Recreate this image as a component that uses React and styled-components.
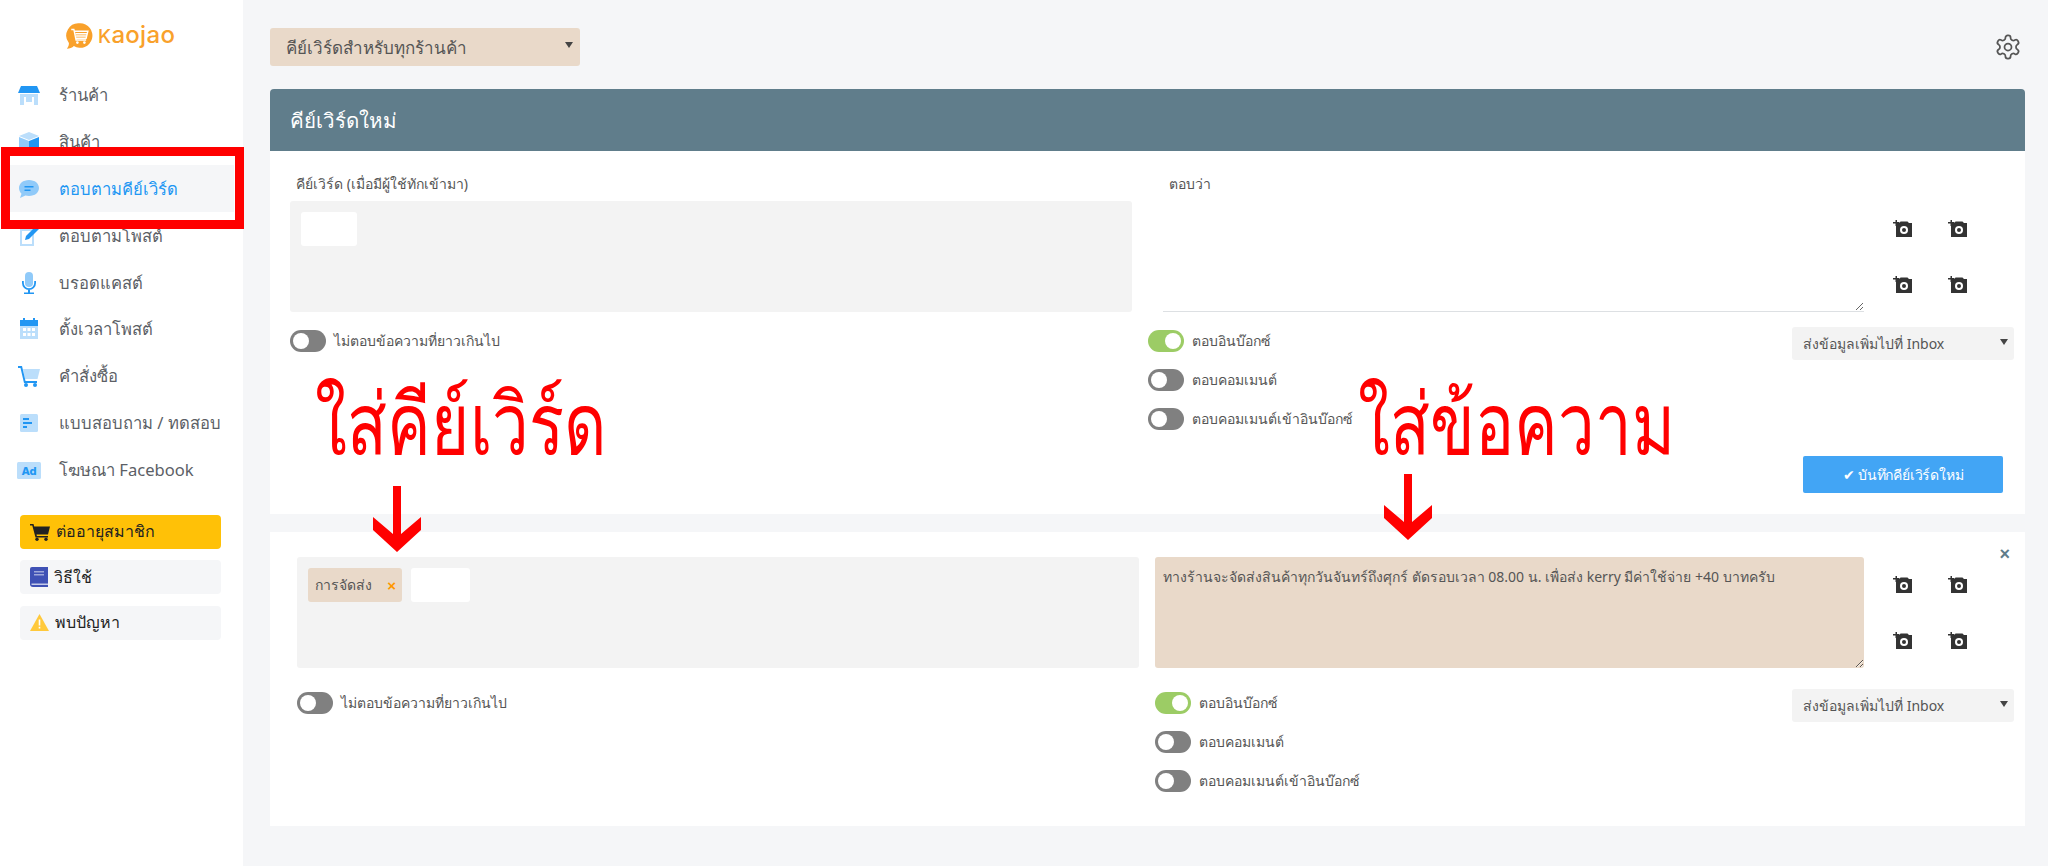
import React from "react";
import styled, { createGlobalStyle } from "styled-components";

const GlobalStyle = createGlobalStyle`
  html, body {
    margin: 0;
    padding: 0;
    background: #f5f6f8;
    font-family: "Noto Sans", "Open Sans", sans-serif;
    color: #555;
  }
  * { box-sizing: border-box; }
`;

const Page = styled.div`
  position: relative;
  display: flex;
  width: 2048px;
  height: 866px;
  overflow: hidden;
`;

/* sidebar */
const Sidebar = styled.aside`
  width: 243px;
  flex-shrink: 0;
  background: #fff;
`;

const LogoRow = styled.div`
  height: 71.500px;
  padding: 22px 0 0 66px;
  display: flex;
  align-items: flex-start;
  gap: 4px;
`;

const LogoText = styled.span`
  display: block;
  font-family: "Inter", sans-serif;
  font-size: 24px;
  line-height: 26px;
  font-weight: 500;
  letter-spacing: 0.3px;
  color: #f9a12b;

  &::first-letter {
    font-size: 19px;
  }
`;

const Nav = styled.nav`
  margin: 0 9px 0 10px;
`;

const NavItem = styled.div`
  height: 46.900px;
  padding-left: 7px;
  display: flex;
  align-items: center;
  gap: 18px;
  font-size: 16.600px;
  color: ${(p) => (p.$active ? "#2196f3" : "#5c5f66")};
  background: ${(p) => (p.$active ? "#f5f6f8" : "transparent")};
`;

const NavIcon = styled.svg`
  width: 24px;
  height: 24px;
  flex-shrink: 0;
`;

const SideButtons = styled.div`
  margin: 21px 22px 0 20px;
  display: flex;
  flex-direction: column;
  gap: 11.500px;
`;

const SideButton = styled.div`
  height: 34px;
  padding-left: 10px;
  border-radius: 4px;
  display: flex;
  align-items: center;
  gap: 6px;
  font-size: 16px;
  color: #222;
  background: ${(p) => (p.$primary ? "#ffc107" : "#f5f6f8")};
`;

/* main column */
const Main = styled.main`
  flex: 1;
  padding: 28px 23px 0 27px;
`;

const TopBar = styled.div`
  display: flex;
  justify-content: space-between;
  align-items: center;
  margin-bottom: 23px;
`;

const ShopSelect = styled.div`
  width: 310px;
  height: 38px;
  padding: 0 7px 0 16px;
  border-radius: 3px;
  background: #e9d9c9;
  display: flex;
  align-items: center;
  justify-content: space-between;
  font-size: 17px;
  color: #555;
`;

const Caret = styled.span`
  width: 0;
  height: 0;
  margin-bottom: 4px;
  border-left: 4px solid transparent;
  border-right: 4px solid transparent;
  border-top: 6px solid #444;
`;

const GearIcon = styled.svg`
  width: 28px;
  height: 28px;
  margin-right: 3px;
`;

const CardHeader = styled.div`
  height: 62px;
  padding-left: 20px;
  border-radius: 4px 4px 0 0;
  background: #607d8b;
  display: flex;
  align-items: center;
  font-size: 20.500px;
  color: #fff;
`;

const Card = styled.section`
  position: relative;
  background: #fff;
  margin-top: ${(p) => p.$top || 0}px;
  padding: ${(p) => p.$padTop}px 11px ${(p) => p.$padBottom}px ${(p) => p.$inset}px;
`;

const EditorGrid = styled.div`
  display: grid;
  grid-template-columns: 842px 1fr;
  column-gap: 16px;
`;

const FieldLabel = styled.div`
  height: 20px;
  margin: 0 0 7px ${(p) => p.$indent}px;
  font-size: 14px;
  line-height: 20px;
  color: #555;
`;

const KeywordBox = styled.div`
  height: 111px;
  padding: 11px;
  border-radius: 3px;
  background: #f3f3f3;
  display: flex;
  align-items: flex-start;
  gap: 9px;
`;

const KeywordInput = styled.div`
  width: ${(p) => p.$width}px;
  height: 34px;
  border-radius: 3px;
  background: #fff;
`;

const KeywordTag = styled.div`
  width: 94px;
  height: 34px;
  padding: 0 6px 0 7px;
  border-radius: 3px;
  background: #e9d9c9;
  display: flex;
  align-items: center;
  justify-content: space-between;
  font-size: 14px;
  color: #555;
`;

const TagRemove = styled.span`
  font-family: "Liberation Sans", sans-serif;
  font-size: 15px;
  font-weight: 700;
  color: #ff9800;
`;

const ReplyRow = styled.div`
  display: flex;
  align-items: center;
`;

const ReplyField = styled.textarea`
  flex: 1;
  height: 111px;
  margin-left: ${(p) => (p.$filled ? 0 : 15)}px;
  padding: 10px 8px;
  border: none;
  border-radius: ${(p) => (p.$filled ? "3px" : "0")};
  border-bottom: ${(p) => (p.$filled ? "none" : "1px solid #dde0e3")};
  outline: none;
  background: ${(p) => (p.$filled ? "#e9d9c9" : "transparent")};
  font-family: inherit;
  font-size: 14px;
  line-height: 20px;
  color: #555;
`;

const PhotoGrid = styled.div`
  width: 150px;
  padding-left: 29px;
  display: grid;
  grid-template-columns: repeat(2, 19px);
  column-gap: 36px;
  row-gap: 39px;
`;

const PhotoIcon = styled.svg`
  width: 19px;
  height: 17px;
`;

const OptionRow = styled.div`
  margin-top: ${(p) => p.$gap}px;
  display: flex;
  justify-content: space-between;
  align-items: flex-start;
`;

const SwitchStack = styled.div`
  padding-top: 3px;
  display: flex;
  flex-direction: column;
  gap: 17px;
`;

const SwitchRow = styled.label`
  height: 22px;
  display: flex;
  align-items: center;
  gap: 8px;
  font-size: 14px;
  color: #555;
`;

const Track = styled.span`
  width: 36px;
  height: 22px;
  padding: 3px;
  border-radius: 11px;
  background: ${(p) => (p.$on ? "#9ccc65" : "#808080")};
  display: flex;
  justify-content: ${(p) => (p.$on ? "flex-end" : "flex-start")};
`;

const Knob = styled.span`
  width: 16px;
  height: 16px;
  border-radius: 50%;
  background: #fff;
`;

const InboxSelect = styled.div`
  width: 222px;
  height: 33px;
  padding: 0 6px 0 11px;
  border-radius: 3px;
  background: #f3f3f3;
  display: flex;
  align-items: center;
  justify-content: space-between;
  font-size: 14px;
  color: #555;
`;

const Footer = styled.div`
  margin-top: 26px;
  padding-right: 11px;
  display: flex;
  justify-content: flex-end;
`;

const SaveButton = styled.button`
  width: 200px;
  height: 37px;
  border: none;
  border-radius: 2px;
  background: #42a5f5;
  color: #fff;
  font-family: inherit;
  font-size: 14px;
  letter-spacing: -0.2px;
  display: flex;
  align-items: center;
  justify-content: center;
  gap: 4px;
`;

const CloseMark = styled.span`
  position: absolute;
  top: 13px;
  right: 15px;
  font-family: "Liberation Sans", sans-serif;
  font-size: 18px;
  line-height: 18px;
  font-weight: 700;
  color: #607d8b;
`;

/* red annotations painted on top of the screenshot */
const RedFrame = styled.div`
  position: absolute;
  left: 1px;
  top: 147px;
  width: 243px;
  height: 82px;
  border: 9px solid #ff0000;
`;

const BigNote = styled.div`
  position: absolute;
  left: ${(p) => p.$x}px;
  top: ${(p) => p.$y}px;
  font-size: 85px;
  line-height: 110px;
  white-space: nowrap;
  color: #ff0000;
  transform: scaleX(${(p) => p.$squeeze});
  transform-origin: left center;
`;

const DownArrow = styled.svg`
  position: absolute;
  left: ${(p) => p.$x}px;
  top: ${(p) => p.$y}px;
  width: 48px;
  height: 66px;
`;

const Icon = ({ children }) => <NavIcon viewBox="0 0 24 24">{children}</NavIcon>;

const LIGHT = "#bbdefb";
const BLUE = "#2196f3";

const menu = [
  {
    label: "ร้านค้า",
    icon: (
      <>
        <path d="M3 11h18v11h-4v-8H7v8H3z" fill={LIGHT} />
        <path d="M9 14h6v5H9z" fill={LIGHT} />
        <path d="M4 3h16l3 7H1z" fill={BLUE} />
      </>
    ),
  },
  {
    label: "สินค้า",
    icon: (
      <>
        <path d="M12 2l10 4-10 4L2 6z" fill={LIGHT} />
        <path d="M2 7l10 4v11L2 18z" fill="#90caf9" />
        <path d="M22 7l-10 4v11l10-4z" fill={BLUE} />
      </>
    ),
  },
  {
    label: "ตอบตามคีย์เวิร์ด",
    active: true,
    icon: (
      <>
        <path d="M12 3c6 0 10 3.600 10 8s-4 8-10 8c-1.300 0-2.500-.2-3.600-.5L3 21l1.500-4.300C2.900 15.200 2 13.200 2 11c0-4.400 4-8 10-8z" fill="#90caf9" />
        <path d="M7.500 9h9v1.600h-9zM7.500 12.500h6v1.600h-6z" fill={BLUE} />
      </>
    ),
  },
  {
    label: "ตอบตามโพสต์",
    icon: (
      <>
        <path d="M4 6h12v15H4z" fill="#fff" stroke={LIGHT} strokeWidth="2" />
        <path d="M19 2l3 3-10 10-4 1 1-4z" fill={BLUE} />
      </>
    ),
  },
  {
    label: "บรอดแคสต์",
    icon: (
      <>
        <rect x="8" y="1" width="8" height="15" rx="4" fill="#90caf9" />
        <path d="M5 10v2a7 7 0 0 0 14 0v-2h-1.800v2a5.200 5.200 0 0 1-10.400 0v-2zM11 19h2v2.500h4V23H7v-1.500h4z" fill={BLUE} />
      </>
    ),
  },
  {
    label: "ตั้งเวลาโพสต์",
    icon: (
      <>
        <path d="M3 8h18v14H3z" fill={LIGHT} />
        <path d="M3 3h18v6H3z" fill={BLUE} />
        <path d="M6 1h2v4H6zM16 1h2v4h-2z" fill={BLUE} />
        <path d="M6 11h3v3H6zM10.500 11h3v3h-3zM15 11h3v3h-3zM6 16h3v3H6zM10.500 16h3v3h-3zM15 16h3v3h-3z" fill="#fff" />
      </>
    ),
  },
  {
    label: "คำสั่งซื้อ",
    icon: (
      <>
        <path d="M6 5h17l-2.500 10H8z" fill={LIGHT} />
        <path d="M1 2h4l3.500 15H20v2H7L3.500 4H1z" fill={BLUE} />
        <circle cx="9" cy="21" r="2" fill={BLUE} />
        <circle cx="18" cy="21" r="2" fill={BLUE} />
      </>
    ),
  },
  {
    label: "แบบสอบถาม / ทดสอบ",
    icon: (
      <>
        <rect x="3" y="3" width="18" height="18" rx="1.500" fill={LIGHT} />
        <path d="M6 7h6v2H6zM6 11h9v2H6zM6 15h4v2H6z" fill={BLUE} />
      </>
    ),
  },
  {
    label: "โฆษณา Facebook",
    icon: (
      <>
        <rect x="0" y="4" width="24" height="17" rx="1.500" fill={LIGHT} />
        <text x="12" y="17" textAnchor="middle" fontFamily="Inter, sans-serif" fontSize="11" fontWeight="800" fill={BLUE}>Ad</text>
      </>
    ),
  },
];

const CartGlyph = () => (
  <svg width="20" height="18" viewBox="0 0 20 18">
    <path d="M0 1h3.500l.7 2.500H20l-2 8H6.500l.4 1.500H18v1.500H5.500L2.300 2.500H0z" fill="#222" />
    <circle cx="7" cy="16.300" r="1.700" fill="#222" />
    <circle cx="16" cy="16.300" r="1.700" fill="#222" />
  </svg>
);

const BookGlyph = () => (
  <svg width="18" height="20" viewBox="0 0 18 20">
    <path d="M2 0h16v20H3a3 3 0 0 1-3-3V2a2 2 0 0 1 2-2z" fill="#3f51b5" />
    <path d="M1.500 16.500h16.500v1.500H1.500z" fill="#c5cae9" />
    <path d="M4 4h10v1.500H4zM4 7h10v1.500H4z" fill="#9fa8da" />
  </svg>
);

const WarningGlyph = () => (
  <svg width="19" height="17" viewBox="0 0 19 17">
    <path d="M9.500 0L19 17H0z" fill="#ffc93c" />
    <path d="M8.700 5.500h1.600v6H8.700zM8.700 12.800h1.600v1.700H8.700z" fill="#fff" />
  </svg>
);

const LogoMark = () => (
  <svg width="28" height="28" viewBox="0 0 32 31">
    <path d="M16 1a14 14 0 1 1-7 26c-2 2-5 3-8 3 1.500-2 2.500-4 2.300-6.500A14 14 0 0 1 16 1z" fill="#f9a12b" />
    <path d="M6 8h3l2.500 12h11.500M10 10h15l-2 8H11.500M11 13h13M11.500 15.500h12" stroke="#fff" strokeWidth="1.600" fill="none" />
    <circle cx="13" cy="23" r="1.500" fill="#fff" />
    <circle cx="21" cy="23" r="1.500" fill="#fff" />
  </svg>
);

const Photo = () => (
  <PhotoIcon viewBox="0 0 19 17">
    <path d="M3 3h3.500l1-1.500h7L16 3h3v14H3z" fill="#333" />
    <path d="M2.500 0h1.500v2h2.500v1.500H4V6H2.500V3.500H0V2h2.500z" fill="#333" />
    <circle cx="11" cy="10" r="4" fill="#fff" />
    <circle cx="11" cy="10" r="2" fill="#333" />
  </PhotoIcon>
);

const Switch = ({ on, label }) => (
  <SwitchRow>
    <Track $on={on}>
      <Knob />
    </Track>
    {label}
  </SwitchRow>
);

const ReplySwitches = () => (
  <SwitchStack>
    <Switch on label="ตอบอินบ๊อกซ์" />
    <Switch label="ตอบคอมเมนต์" />
    <Switch label="ตอบคอมเมนต์เข้าอินบ๊อกซ์" />
  </SwitchStack>
);

const Photos = () => (
  <PhotoGrid>
    <Photo />
    <Photo />
    <Photo />
    <Photo />
  </PhotoGrid>
);

const Arrow = ({ x, y }) => (
  <DownArrow $x={x} $y={y} viewBox="0 0 48 66">
    <path d="M20 0H28V48L48 31V44L24 66L0 44V31L20 48Z" fill="#ff0000" />
  </DownArrow>
);

export default function App() {
  return (
    <Page>
      <GlobalStyle />
      <Sidebar>
        <LogoRow>
          <LogoMark />
          <LogoText>Kaojao</LogoText>
        </LogoRow>
        <Nav>
          {menu.map((item) => (
            <NavItem key={item.label} $active={item.active}>
              <Icon>{item.icon}</Icon>
              {item.label}
            </NavItem>
          ))}
        </Nav>
        <SideButtons>
          <SideButton $primary>
            <CartGlyph />
            ต่ออายุสมาชิก
          </SideButton>
          <SideButton>
            <BookGlyph />
            วิธีใช้
          </SideButton>
          <SideButton>
            <WarningGlyph />
            พบปัญหา
          </SideButton>
        </SideButtons>
      </Sidebar>

      <Main>
        <TopBar>
          <ShopSelect>
            คีย์เวิร์ดสำหรับทุกร้านค้า
            <Caret />
          </ShopSelect>
          <GearIcon viewBox="0 0 24 24" fill="none" stroke="#555" strokeWidth="1.500" strokeLinecap="round" strokeLinejoin="round">
            <path d="M12.220 2h-.440a2 2 0 0 0-2 2v.180a2 2 0 0 1-1 1.730l-.430.250a2 2 0 0 1-2 0l-.150-.080a2 2 0 0 0-2.730.730l-.220.380a2 2 0 0 0 .730 2.730l.150.100a2 2 0 0 1 1 1.720v.510a2 2 0 0 1-1 1.740l-.150.090a2 2 0 0 0-.730 2.730l.220.380a2 2 0 0 0 2.730.730l.150-.080a2 2 0 0 1 2 0l.430.250a2 2 0 0 1 1 1.730V20a2 2 0 0 0 2 2h.440a2 2 0 0 0 2-2v-.180a2 2 0 0 1 1-1.730l.430-.250a2 2 0 0 1 2 0l.150.080a2 2 0 0 0 2.730-.730l.220-.390a2 2 0 0 0-.730-2.730l-.150-.080a2 2 0 0 1-1-1.740v-.500a2 2 0 0 1 1-1.740l.150-.090a2 2 0 0 0 .730-2.730l-.220-.380a2 2 0 0 0-2.730-.730l-.150.080a2 2 0 0 1-2 0l-.430-.250a2 2 0 0 1-1-1.730V4a2 2 0 0 0-2-2z" />
            <circle cx="12" cy="12" r="3" />
          </GearIcon>
        </TopBar>

        <CardHeader>คีย์เวิร์ดใหม่</CardHeader>
        <Card $inset={20} $padTop={23} $padBottom={21}>
          <EditorGrid>
            <FieldLabel $indent={6}>คีย์เวิร์ด (เมื่อมีผู้ใช้ทักเข้ามา)</FieldLabel>
            <FieldLabel $indent={21}>ตอบว่า</FieldLabel>
            <KeywordBox>
              <KeywordInput $width={56} />
            </KeywordBox>
            <ReplyRow>
              <ReplyField readOnly value="" />
              <Photos />
            </ReplyRow>
            <OptionRow $gap={15}>
              <SwitchStack>
                <Switch label="ไม่ตอบข้อความที่ยาวเกินไป" />
              </SwitchStack>
            </OptionRow>
            <OptionRow $gap={15}>
              <ReplySwitches />
              <InboxSelect>
                ส่งข้อมูลเพิ่มไปที่ Inbox
                <Caret />
              </InboxSelect>
            </OptionRow>
          </EditorGrid>
          <Footer>
            <SaveButton>✔ บันทึกคีย์เวิร์ดใหม่</SaveButton>
          </Footer>
        </Card>

        <Card $top={18} $inset={27} $padTop={25} $padBottom={34}>
          <CloseMark>×</CloseMark>
          <EditorGrid>
            <KeywordBox>
              <KeywordTag>
                การจัดส่ง
                <TagRemove>×</TagRemove>
              </KeywordTag>
              <KeywordInput $width={59} />
            </KeywordBox>
            <ReplyRow>
              <ReplyField
                $filled
                readOnly
                value="ทางร้านจะจัดส่งสินค้าทุกวันจันทร์ถึงศุกร์ ตัดรอบเวลา 08.00 น. เพื่อส่ง kerry มีค่าใช้จ่าย +40 บาทครับ"
              />
              <Photos />
            </ReplyRow>
            <OptionRow $gap={21}>
              <SwitchStack>
                <Switch label="ไม่ตอบข้อความที่ยาวเกินไป" />
              </SwitchStack>
            </OptionRow>
            <OptionRow $gap={21}>
              <ReplySwitches />
              <InboxSelect>
                ส่งข้อมูลเพิ่มไปที่ Inbox
                <Caret />
              </InboxSelect>
            </OptionRow>
          </EditorGrid>
        </Card>
      </Main>

      <RedFrame />
      <BigNote $x={315} $y={366} $squeeze={0.77}>ใส่คีย์เวิร์ด</BigNote>
      <BigNote $x={1358} $y={366} $squeeze={0.77}>ใส่ข้อความ</BigNote>
      <Arrow x={373} y={486} />
      <Arrow x={1384} y={474} />
    </Page>
  );
}
